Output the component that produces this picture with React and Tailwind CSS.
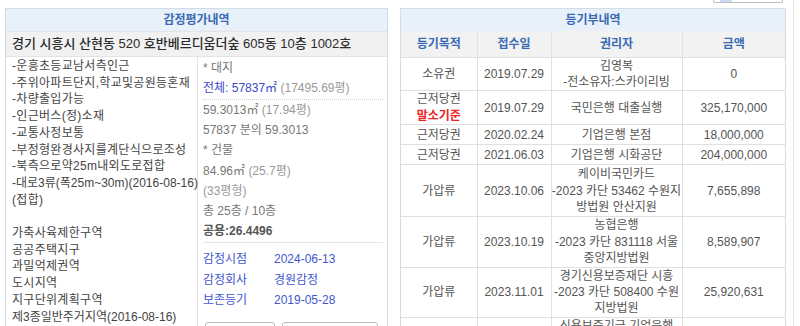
const leftNotes = [
  '-운흥초등교남서측인근',
  '-주위아파트단지,학교및공원등혼재',
  '-차량출입가능',
  '-인근버스(정)소재',
  '-교통사정보통',
  '-부정형완경사지를계단식으로조성',
  '-북측으로약25m내외도로접합',
  '-대로3류(폭25m~30m)(2016-08-16)',
  '(접합)',
];

const zones = [
  '가축사육제한구역',
  '공공주택지구',
  '과밀억제권역',
  '도시지역',
  '지구단위계획구역',
  '제3종일반주거지역(2016-08-16)',
  '상대보호구역(2024-06-13)(교육환경)',
];

const rows = [
  { h: 'h-[33px]', kind: ['소유권'], date: '2019.07.29', who: ['김영복', '-전소유자:스카이리빙'], amt: '0' },
  { h: 'h-[34px]', kind: ['근저당권'], base: true, date: '2019.07.29', who: ['국민은행 대출실행'], amt: '325,170,000' },
  { h: 'h-[20px]', kind: ['근저당권'], date: '2020.02.24', who: ['기업은행 본점'], amt: '18,000,000' },
  { h: 'h-[20px]', kind: ['근저당권'], date: '2021.06.03', who: ['기업은행 시화공단'], amt: '204,000,000' },
  { h: 'h-[52px]', kind: ['가압류'], date: '2023.10.06', who: ['케이비국민카드', '-2023 카단 53462 수원지', '방법원 안산지원'], amt: '7,655,898' },
  { h: 'h-[50px]', kind: ['가압류'], date: '2023.10.19', who: ['농협은행', '-2023 카단 831118 서울', '중앙지방법원'], amt: '8,589,907' },
  { h: 'h-[50px]', kind: ['가압류'], date: '2023.11.01', who: ['경기신용보증재단 시흥', '-2023 카단 508400 수원', '지방법원'], amt: '25,920,631' },
  { h: 'h-[50px]', kind: ['가압류'], date: '2023.11.20', who: ['신용보증기금 기업은행', '-2023 카단 1234 수원', '지방법원'], amt: '30,000,000' },
];

function InfoRow({ label, value }) {
  return (
    <div className="flex leading-[20.5px] text-[#4257d0]">
      <span className="w-[71px]">{label}</span>
      <span>{value}</span>
    </div>
  );
}

export default function App() {
  return (
    <div className="w-[800px] h-[326px] overflow-hidden bg-white font-['Liberation_Sans','Noto_Sans_CJK_KR',sans-serif] text-[12px]">
      <div className="h-[8px] flex justify-end pr-[17px]">
        <div className="w-[70px] h-[3px] border border-t-0 border-[#bdbdbd] rounded-b-[2px] flex pl-[6px]">
          <div className="w-[12px] h-[2px] bg-[#c9dcf3]" />
        </div>
      </div>

      <div className="flex pl-[5px]">
        {/* 감정평가내역 */}
        <div className="w-[383px] h-[330px] border border-[#d3dbe6] overflow-hidden">
          <div className="h-[22px] bg-[#e8f0fa] flex items-center justify-center font-bold text-[#3a6bb2]">
            감정평가내역
          </div>
          <div className="h-[26px] bg-[#f1f1f1] border-y border-[#e3e3e3] flex items-center pl-[6px] text-[13px] font-medium text-[#2b2b2b]">
            경기 시흥시 산현동 520 호반베르디움더숲 605동 10층 1002호
          </div>
          <div className="flex">
            <div className="w-[192px] shrink-0 border-r border-[#e3e3e3] pl-[6px] pt-[1px] leading-[16.7px] text-[#444] whitespace-nowrap tracking-[0.3px]">
              {leftNotes.map((t) => (
                <div key={t} className={t.includes('2016') ? 'tracking-normal' : ''}>
                  {t}
                </div>
              ))}
              <div>&nbsp;</div>
              {zones.map((t) => (
                <div key={t} className={t.includes('20') ? 'tracking-normal' : ''}>
                  {t}
                </div>
              ))}
            </div>
            <div className="flex-1 pl-[5px] pr-[4px] text-[#777]">
              <div className="pt-[1px] leading-[20px]">* 대지</div>
              <div className="leading-[20px] border-b border-dotted border-[#cfcfcf] pb-[1px]">
                <span className="text-[#3a48c8]">전체: 57837㎡</span>
                <span className="text-[#9a9a9a]"> (17495.69평)</span>
              </div>
              <div className="leading-[20.2px]">
                59.3013㎡ <span className="text-[#9a9a9a]"> (17.94평)</span>
              </div>
              <div className="leading-[20.2px]">57837 분의 59.3013</div>
              <div className="leading-[20.2px]">* 건물</div>
              <div className="leading-[20.2px]">
                84.96㎡ <span className="text-[#9a9a9a]"> (25.7평)</span>
              </div>
              <div className="leading-[20.2px] text-[#9a9a9a]">(33평형)</div>
              <div className="leading-[20.2px]">총 25층 / 10층</div>
              <div className="leading-[20.2px] pb-[1px] border-b border-[#e5e5e5] font-semibold text-[#555]">
                공용:26.4496
              </div>
              <div className="pt-[6px]">
                <InfoRow label="감정시점" value="2024-06-13" />
                <InfoRow label="감정회사" value="경원감정" />
                <InfoRow label="보존등기" value="2019-05-28" />
              </div>
              <div className="mt-[11px] flex gap-[7px] pl-[2px]">
                <div className="w-[70px] h-[22px] border border-[#bdbdbd] rounded-[3px] bg-white" />
                <div className="w-[96px] h-[22px] border border-[#bdbdbd] rounded-[3px] bg-white" />
              </div>
            </div>
          </div>
        </div>

        {/* 등기부내역 */}
        <div className="ml-[12px] w-[386px] h-[330px] border border-[#d3dbe6] overflow-hidden">
          <div className="h-[22px] bg-[#e8f0fa] flex items-center justify-center font-bold text-[#3a6bb2]">
            등기부내역
          </div>
          <table className="w-full table-fixed border-collapse text-[#555]">
            <colgroup>
              <col className="w-[76px]" />
              <col className="w-[74px]" />
              <col className="w-[131px]" />
              <col className="w-[103px]" />
            </colgroup>
            <thead>
              <tr className="h-[26px] bg-[#f2f2f2] text-[#3a6bb2] font-bold">
                <th className="border border-t-0 border-l-0 border-[#e0e0e0] font-bold">등기목적</th>
                <th className="border border-t-0 border-[#e0e0e0] font-bold">접수일</th>
                <th className="border border-t-0 border-[#e0e0e0] font-bold">권리자</th>
                <th className="border border-t-0 border-r-0 border-[#e0e0e0] font-bold">금액</th>
              </tr>
            </thead>
            <tbody>
              {rows.map((r, i) => (
                <tr key={i} className={`${r.h} text-center leading-[16.4px]`}>
                  <td className="border border-l-0 border-[#e0e0e0] p-0">
                    {r.kind.map((k) => (
                      <div key={k}>{k}</div>
                    ))}
                    {r.base && <div className="font-bold text-[#ee2222]">말소기준</div>}
                  </td>
                  <td className="border border-[#e0e0e0] p-0">{r.date}</td>
                  <td className="border border-[#e0e0e0] p-0 whitespace-nowrap">
                    {r.who.map((w) => (
                      <div key={w}>{w}</div>
                    ))}
                  </td>
                  <td className="border border-r-0 border-[#e0e0e0] p-0">{r.amt}</td>
                </tr>
              ))}
            </tbody>
          </table>
        </div>

        <div className="ml-[7px] w-px h-[326px] -mt-[8px] bg-[#e4e4e4]" />
      </div>
    </div>
  );
}
